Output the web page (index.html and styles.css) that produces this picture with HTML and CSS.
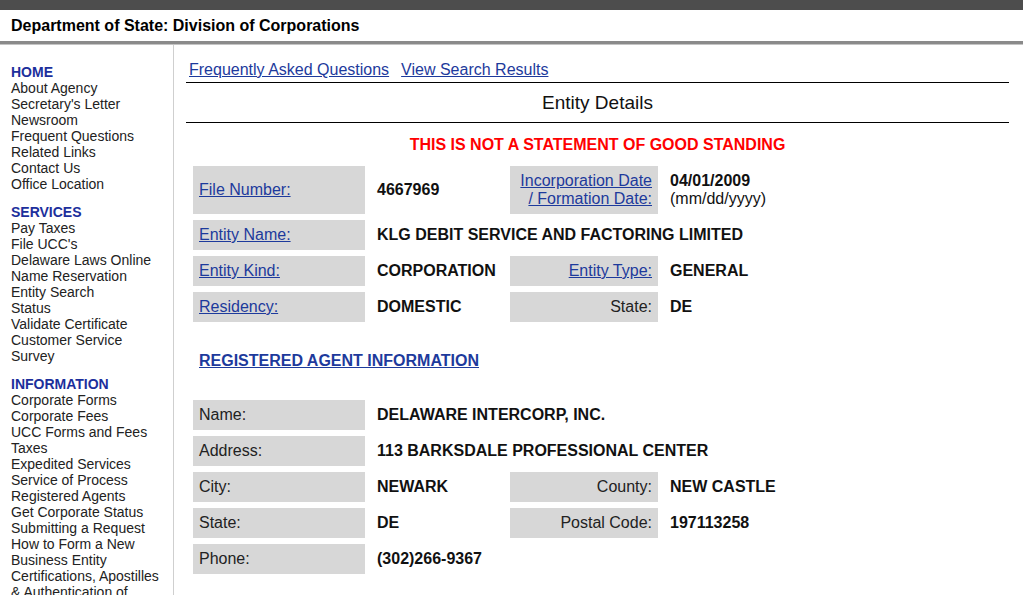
FILE: index.html
```html
<!DOCTYPE html>
<html lang="en">
<head>
<meta charset="utf-8">
<title>Department of State: Division of Corporations</title>
<link rel="stylesheet" href="styles.css">
</head>
<body>
<div class="topbar"></div>
<header class="site-header">Department of State: Division of Corporations</header>
<div class="layout">
  <nav class="sidebar">
    <div class="nav-group">
      <a class="nav-head" href="#">HOME</a>
      <a href="#">About Agency</a>
      <a href="#">Secretary's Letter</a>
      <a href="#">Newsroom</a>
      <a href="#">Frequent Questions</a>
      <a href="#">Related Links</a>
      <a href="#">Contact Us</a>
      <a href="#">Office Location</a>
    </div>
    <div class="nav-group">
      <a class="nav-head" href="#">SERVICES</a>
      <a href="#">Pay Taxes</a>
      <a href="#">File UCC's</a>
      <a href="#">Delaware Laws Online</a>
      <a href="#">Name Reservation</a>
      <a href="#">Entity Search</a>
      <a href="#">Status</a>
      <a href="#">Validate Certificate</a>
      <a href="#">Customer Service Survey</a>
    </div>
    <div class="nav-group">
      <a class="nav-head" href="#">INFORMATION</a>
      <a href="#">Corporate Forms</a>
      <a href="#">Corporate Fees</a>
      <a href="#">UCC Forms and Fees</a>
      <a href="#">Taxes</a>
      <a href="#">Expedited Services</a>
      <a href="#">Service of Process</a>
      <a href="#">Registered Agents</a>
      <a href="#">Get Corporate Status</a>
      <a href="#">Submitting a Request</a>
      <a href="#">How to Form a New Business Entity</a>
      <a href="#">Certifications, Apostilles &amp; Authentication of Documents</a>
    </div>
  </nav>
  <main class="content">
    <div class="toplinks">
      <a href="#">Frequently Asked Questions</a>
      <a href="#">View Search Results</a>
    </div>
    <h1 class="title">Entity Details</h1>
    <p class="warning">THIS IS NOT A STATEMENT OF GOOD STANDING</p>
    <table class="details">
      <tr>
        <td class="lbl c1"><a href="#">File Number:</a></td>
        <td class="val c2">4667969</td>
        <td class="lbl c3 right"><a href="#">Incorporation Date<br>/ Formation Date:</a></td>
        <td class="val c4 top">04/01/2009<br><span class="note">(mm/dd/yyyy)</span></td>
      </tr>
      <tr>
        <td class="lbl c1"><a href="#">Entity Name:</a></td>
        <td class="val" colspan="3">KLG DEBIT SERVICE AND FACTORING LIMITED</td>
      </tr>
      <tr>
        <td class="lbl c1"><a href="#">Entity Kind:</a></td>
        <td class="val c2">CORPORATION</td>
        <td class="lbl c3 right"><a href="#">Entity Type:</a></td>
        <td class="val c4">GENERAL</td>
      </tr>
      <tr>
        <td class="lbl c1"><a href="#">Residency:</a></td>
        <td class="val c2">DOMESTIC</td>
        <td class="lbl c3 right">State:</td>
        <td class="val c4">DE</td>
      </tr>
    </table>
    <h2 class="section"><a href="#">REGISTERED AGENT INFORMATION</a></h2>
    <table class="details">
      <tr>
        <td class="lbl c1">Name:</td>
        <td class="val" colspan="3">DELAWARE INTERCORP, INC.</td>
      </tr>
      <tr>
        <td class="lbl c1">Address:</td>
        <td class="val" colspan="3">113 BARKSDALE PROFESSIONAL CENTER</td>
      </tr>
      <tr>
        <td class="lbl c1">City:</td>
        <td class="val c2">NEWARK</td>
        <td class="lbl c3 right">County:</td>
        <td class="val c4">NEW CASTLE</td>
      </tr>
      <tr>
        <td class="lbl c1">State:</td>
        <td class="val c2">DE</td>
        <td class="lbl c3 right">Postal Code:</td>
        <td class="val c4">197113258</td>
      </tr>
      <tr>
        <td class="lbl c1">Phone:</td>
        <td class="val c2">(302)266-9367</td>
        <td></td>
        <td></td>
      </tr>
    </table>
  </main>
</div>
</body>
</html>
```

FILE: styles.css
```css
html, body {
  margin: 0;
  padding: 0;
  background: #fff;
}
body {
  font-family: "Liberation Sans", Arial, Helvetica, sans-serif;
  color: #111;
}
.topbar {
  height: 10px;
  background: #4d4d4d;
}
.site-header {
  height: 31px;
  line-height: 31px;
  padding-left: 11px;
  font-size: 16px;
  font-weight: bold;
  color: #000;
  border-bottom: 3px solid #8a8a8a;
  box-shadow: 0 1px 0 #c4c4c4;
}
.layout {
  display: flex;
  align-items: flex-start;
  margin-top: 1px;
}
.sidebar {
  flex: 0 0 154px;
  width: 154px;
  padding: 19px 8px 40px 11px;
  border-right: 1px solid #cfcfcf;
  font-size: 14px;
  line-height: 16px;
}
.nav-group {
  display: flex;
  flex-direction: column;
  align-items: flex-start;
}
.nav-group + .nav-group {
  margin-top: 12px;
}
.sidebar a {
  color: #222;
  text-decoration: none;
}
.sidebar a.nav-head {
  color: #1c2f9c;
  font-weight: bold;
}
.content {
  flex: 1;
  margin: 0 14px 0 12px;
  padding-top: 16px;
}
.toplinks {
  display: flex;
  gap: 12px;
  padding-left: 3px;
  font-size: 16px;
  line-height: 18px;
  padding-bottom: 3px;
  border-bottom: 1px solid #000;
}
.toplinks a {
  color: #1d3a9c;
}
.title {
  margin: 0;
  height: 39px;
  line-height: 39px;
  text-align: center;
  font-size: 19px;
  font-weight: normal;
  color: #111;
  border-bottom: 1px solid #000;
}
.warning {
  margin: 13px 0 6px;
  text-align: center;
  font-size: 16px;
  line-height: 18px;
  font-weight: bold;
  color: #ff0000;
}
.details {
  border-collapse: separate;
  border-spacing: 6px;
  margin-left: 1px;
  font-size: 16px;
  line-height: 18px;
}
.details td {
  padding: 6px;
  vertical-align: middle;
}
.details td.top {
  vertical-align: top;
}
.lbl {
  background: #d7d7d7;
  color: #222;
  text-align: left;
}
.lbl a {
  color: #1d3a9c;
}
.lbl.right {
  text-align: right;
}
.val {
  font-weight: bold;
  color: #111;
}
.val .note {
  font-weight: normal;
}
.c1 { width: 160px; }
.c2 { width: 121px; }
.c3 { width: 136px; }
.c4 { width: 110px; }
.section {
  margin: 24px 0 24px;
  padding-left: 13px;
  font-size: 16px;
  line-height: 18px;
  font-weight: bold;
}
.section a {
  color: #1d3a9c;
}
```
